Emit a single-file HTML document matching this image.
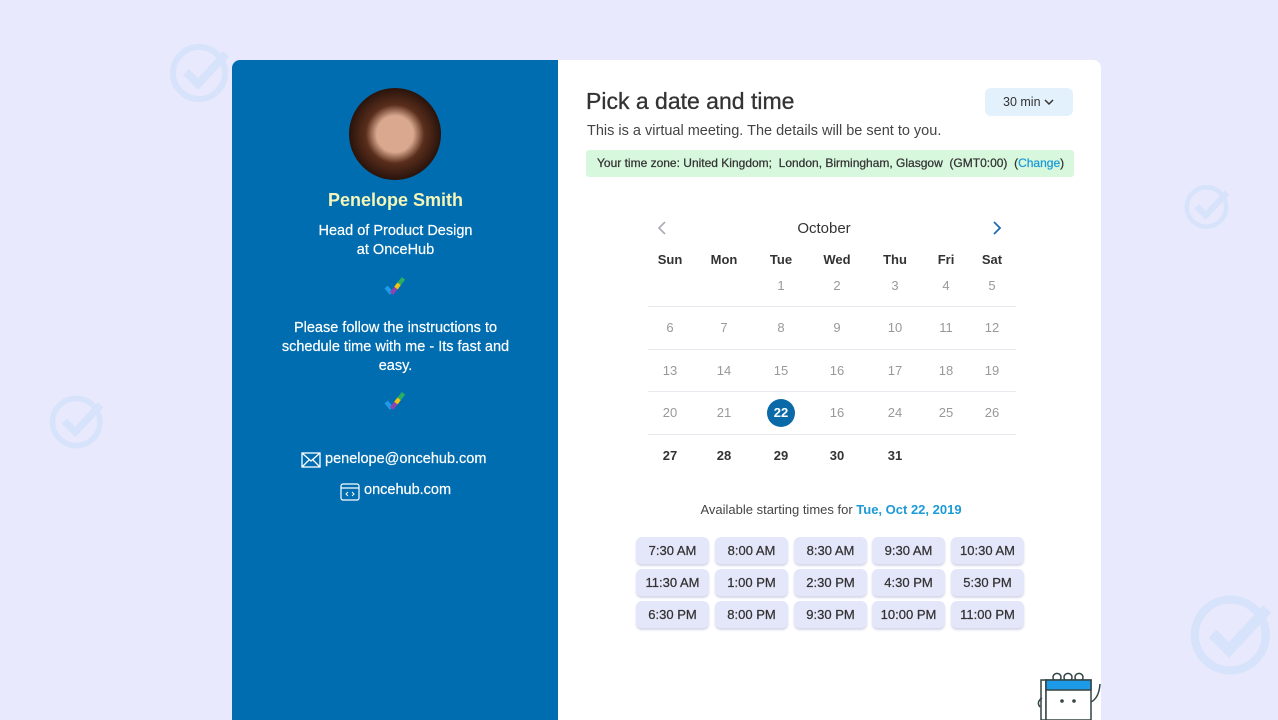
<!DOCTYPE html>
<html><head><style>
*{margin:0;padding:0;box-sizing:border-box}
body{width:1278px;height:720px;background:#e8e9fc;font-family:"Liberation Sans",sans-serif;position:relative;overflow:hidden}
.a{position:absolute}
.left{left:232px;top:60px;width:327px;height:660px;background:#006db1;border-top-left-radius:8px;color:#fff;text-align:center}
.right{left:558px;top:60px;width:543px;height:660px;background:#fff;border-top-right-radius:8px}
.c{position:absolute;text-align:center;transform:translateX(-50%);font-size:13px}
.hd{color:#333;font-weight:bold}
.g{color:#999}
.k{color:#333;font-weight:bold}
.sep{position:absolute;left:648px;width:368px;height:1px;background:#e8eaf0}
.b{position:absolute;width:73px;height:27px;background:#e4e6fa;border-radius:6px;box-shadow:0 2px 2px #d5d7ea;font-size:13px;color:#333;text-align:center;line-height:27px;-webkit-text-stroke:0.25px #333}
</style></head><body>
<svg class="a" style="left:168px;top:40px" width="66" height="66" viewBox="0 0 66 66"><circle cx="31" cy="33" r="26" fill="none" stroke="#d6e3fb" stroke-width="6"/><path d="M18 32l12 12 28-30" fill="none" stroke="#d6e3fb" stroke-width="8"/></svg>
<svg class="a" style="left:48px;top:392px" width="60" height="60" viewBox="0 0 66 66"><circle cx="31" cy="33" r="26" fill="none" stroke="#d6e3fb" stroke-width="6"/><path d="M18 32l12 12 28-30" fill="none" stroke="#d6e3fb" stroke-width="8"/></svg>
<svg class="a" style="left:1183px;top:182px" width="50" height="50" viewBox="0 0 66 66"><circle cx="31" cy="33" r="26" fill="none" stroke="#d6e3fb" stroke-width="6"/><path d="M18 32l12 12 28-30" fill="none" stroke="#d6e3fb" stroke-width="8"/></svg>
<svg class="a" style="left:1188px;top:590px" width="90" height="90" viewBox="0 0 66 66"><circle cx="31" cy="33" r="26" fill="none" stroke="#d6e3fb" stroke-width="6"/><path d="M18 32l12 12 28-30" fill="none" stroke="#d6e3fb" stroke-width="8"/></svg>

<div class="a left">
 <div class="a" style="left:117px;top:28px;width:92px;height:92px;border-radius:50%;background:radial-gradient(circle at 50% 50%,#d9a88e 0 28%,#5a2e1c 45%,#2a140c 70%)"></div>
 <div class="a" style="left:0;width:327px;top:130px;font-size:18px;font-weight:bold;color:#f4f5b8">Penelope Smith</div>
 <div class="a" style="left:0;width:327px;top:162px;font-size:14.5px;line-height:19px;-webkit-text-stroke:0.2px #fff">Head of Product Design<br>at OnceHub</div>
 <svg class="a" style="left:152px;top:216px" width="26" height="22" viewBox="0 0 24 20"><path d="M2 10l5 6" stroke="#1e9be8" stroke-width="4"/><path d="M7 16l4-5" stroke="#8e44ad" stroke-width="4"/><path d="M11 11l3-4" stroke="#f1c40f" stroke-width="4"/><path d="M14 7l4-5" stroke="#27ae60" stroke-width="4"/></svg>
 <div class="a" style="left:40px;width:247px;top:259px;font-size:14.5px;line-height:19px;-webkit-text-stroke:0.2px #fff">Please follow the instructions to schedule time with me - Its fast and easy.</div>
 <svg class="a" style="left:152px;top:331px" width="26" height="22" viewBox="0 0 24 20"><path d="M2 10l5 6" stroke="#1e9be8" stroke-width="4"/><path d="M7 16l4-5" stroke="#8e44ad" stroke-width="4"/><path d="M11 11l3-4" stroke="#f1c40f" stroke-width="4"/><path d="M14 7l4-5" stroke="#27ae60" stroke-width="4"/></svg>
 <svg class="a" style="left:69px;top:392px" width="20" height="16" viewBox="0 0 20 16"><rect x="1" y="1" width="18" height="14" fill="none" stroke="#fff" stroke-width="1.3"/><path d="M1 1l9 8 9-8M1 15l7-7M19 15l-7-7" fill="none" stroke="#fff" stroke-width="1.3"/></svg>
 <div class="a" style="left:93px;top:391px;font-size:14.5px;-webkit-text-stroke:0.2px #fff">penelope@oncehub.com</div>
 <svg class="a" style="left:108px;top:423px" width="20" height="18" viewBox="0 0 20 18"><rect x="1" y="1" width="18" height="16" rx="2" fill="none" stroke="#fff" stroke-width="1.2"/><path d="M1 5h18" stroke="#fff" stroke-width="1.2"/><path d="M8 9l-2 2 2 2M12 9l2 2-2 2" fill="none" stroke="#fff"/></svg>
 <div class="a" style="left:132px;top:422px;font-size:14.5px;-webkit-text-stroke:0.2px #fff">oncehub.com</div>
</div>

<div class="a right"></div>
<div class="a" style="left:586px;top:88px;font-size:23px;color:#333;-webkit-text-stroke:0.3px #333">Pick a date and time</div>
<div class="a" style="left:985px;top:88px;width:88px;height:28px;background:#e3f1fc;border-radius:6px;font-size:12.5px;color:#333;line-height:28px;padding-left:18px">30 min <svg width="10" height="8" viewBox="0 0 10 8"><path d="M1 2l4 4 4-4" fill="none" stroke="#333" stroke-width="1.5"/></svg></div>
<div class="a" style="left:587px;top:123px;font-size:14.5px;color:#444">This is a virtual meeting. The details will be sent to you.</div>
<div class="a" style="left:586px;top:150px;width:488px;height:27px;background:#d8f8de;border-radius:3px;font-size:12px;color:#333;line-height:27px;padding-left:11px;-webkit-text-stroke:0.25px #333">Your time zone: United Kingdom;&nbsp; London, Birmingham, Glasgow&nbsp; (GMT0:00)&nbsp; (<span style="color:#1b9ad6;-webkit-text-stroke:0.25px #1b9ad6">Change</span>)</div>
<svg class="a" style="left:657px;top:221px" width="10" height="14" viewBox="0 0 10 14"><path d="M8 1L2 7l6 6" fill="none" stroke="#aab" stroke-width="1.6"/></svg>
<svg class="a" style="left:992px;top:221px" width="10" height="14" viewBox="0 0 10 14"><path d="M2 1l6 6-6 6" fill="none" stroke="#1d6bb0" stroke-width="1.8"/></svg>
<div class="c" style="left:824px;top:220px;font-size:15px;color:#333">October</div>

<div class="c hd" style="left:670px;top:252px">Sun</div><div class="c hd" style="left:724px;top:252px">Mon</div><div class="c hd" style="left:781px;top:252px">Tue</div><div class="c hd" style="left:837px;top:252px">Wed</div><div class="c hd" style="left:895px;top:252px">Thu</div><div class="c hd" style="left:946px;top:252px">Fri</div><div class="c hd" style="left:992px;top:252px">Sat</div>

<div class="c g" style="left:781px;top:278px">1</div><div class="c g" style="left:837px;top:278px">2</div><div class="c g" style="left:895px;top:278px">3</div><div class="c g" style="left:946px;top:278px">4</div><div class="c g" style="left:992px;top:278px">5</div>
<div class="sep" style="top:306px"></div>
<div class="c g" style="left:670px;top:320px">6</div><div class="c g" style="left:724px;top:320px">7</div><div class="c g" style="left:781px;top:320px">8</div><div class="c g" style="left:837px;top:320px">9</div><div class="c g" style="left:895px;top:320px">10</div><div class="c g" style="left:946px;top:320px">11</div><div class="c g" style="left:992px;top:320px">12</div>
<div class="sep" style="top:349px"></div>
<div class="c g" style="left:670px;top:363px">13</div><div class="c g" style="left:724px;top:363px">14</div><div class="c g" style="left:781px;top:363px">15</div><div class="c g" style="left:837px;top:363px">16</div><div class="c g" style="left:895px;top:363px">17</div><div class="c g" style="left:946px;top:363px">18</div><div class="c g" style="left:992px;top:363px">19</div>
<div class="sep" style="top:391px"></div>
<div class="a" style="left:767px;top:399px;width:28px;height:28px;border-radius:50%;background:#0a6aa8"></div>
<div class="c g" style="left:670px;top:405px">20</div><div class="c g" style="left:724px;top:405px">21</div><div class="c" style="left:781px;top:405px;color:#fff;font-weight:bold">22</div><div class="c g" style="left:837px;top:405px">16</div><div class="c g" style="left:895px;top:405px">24</div><div class="c g" style="left:946px;top:405px">25</div><div class="c g" style="left:992px;top:405px">26</div>
<div class="sep" style="top:434px"></div>
<div class="c k" style="left:670px;top:448px">27</div><div class="c k" style="left:724px;top:448px">28</div><div class="c k" style="left:781px;top:448px">29</div><div class="c k" style="left:837px;top:448px">30</div><div class="c k" style="left:895px;top:448px">31</div>

<div class="c" style="left:831px;top:502px;color:#444;white-space:nowrap">Available starting times for <b style="color:#1b9ad6">Tue, Oct 22, 2019</b></div>

<div class="b" style="left:636px;top:537px">7:30 AM</div><div class="b" style="left:715px;top:537px">8:00 AM</div><div class="b" style="left:794px;top:537px">8:30 AM</div><div class="b" style="left:872px;top:537px">9:30 AM</div><div class="b" style="left:951px;top:537px">10:30 AM</div>
<div class="b" style="left:636px;top:569px">11:30 AM</div><div class="b" style="left:715px;top:569px">1:00 PM</div><div class="b" style="left:794px;top:569px">2:30 PM</div><div class="b" style="left:872px;top:569px">4:30 PM</div><div class="b" style="left:951px;top:569px">5:30 PM</div>
<div class="b" style="left:636px;top:601px">6:30 PM</div><div class="b" style="left:715px;top:601px">8:00 PM</div><div class="b" style="left:794px;top:601px">9:30 PM</div><div class="b" style="left:872px;top:601px">10:00 PM</div><div class="b" style="left:951px;top:601px">11:00 PM</div>

<svg class="a" style="left:1034px;top:672px" width="70" height="48" viewBox="0 0 70 48"><rect x="7" y="8" width="5" height="40" fill="#fff" stroke="#344" stroke-width="1.5"/><rect x="12" y="8" width="45" height="40" fill="#fff" stroke="#344" stroke-width="1.5"/><rect x="12" y="8" width="45" height="10" fill="#1e9be8" stroke="#344" stroke-width="1.5"/><path d="M20 8a4 4 0 1 1 6 0M31 8a4 4 0 1 1 6 0M42 8a4 4 0 1 1 6 0" fill="none" stroke="#344" stroke-width="1.5"/><circle cx="28" cy="29" r="1.8" fill="#344"/><circle cx="40" cy="29" r="1.8" fill="#344"/><path d="M57 30q8-4 9-18M8 26q-6 4-2 9" fill="none" stroke="#344" stroke-width="1.5"/></svg>
</body></html>
